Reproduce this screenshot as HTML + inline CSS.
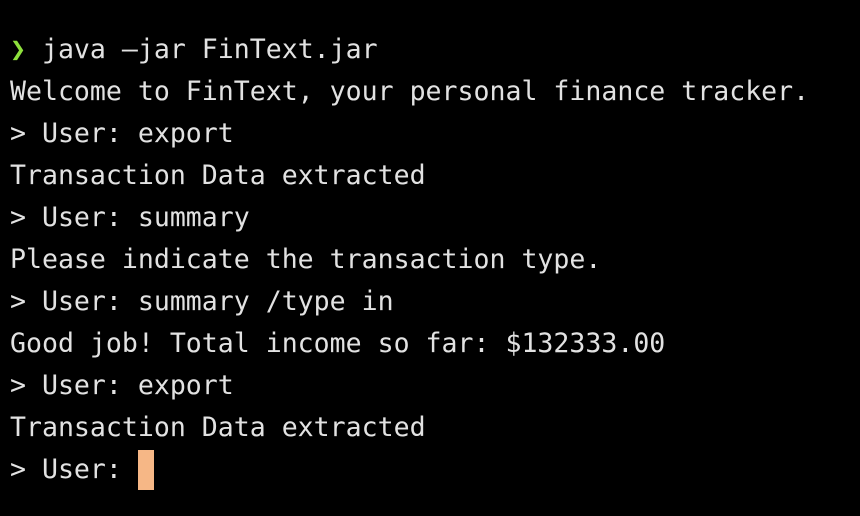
<html><head><style>
body{margin:0;background:#000;width:860px;height:516px;overflow:hidden}
pre{margin:0;padding:29px 0 0 10px;font-family:"DejaVu Sans Mono","Liberation Mono",monospace;font-size:26.55px;line-height:42px;color:#e2e2e2}
.g{color:#8ee03c}
.c{display:inline-block;width:16px;height:40px;background:#f6b786;vertical-align:-12px}
</style></head><body><pre><span class="g">❯</span> java —jar FinText.jar
Welcome to FinText, your personal finance tracker.
&gt; User: export
Transaction Data extracted
&gt; User: summary
Please indicate the transaction type.
&gt; User: summary /type in
Good job! Total income so far: $132333.00
&gt; User: export
Transaction Data extracted
&gt; User: <span class="c"></span></pre></body></html>
